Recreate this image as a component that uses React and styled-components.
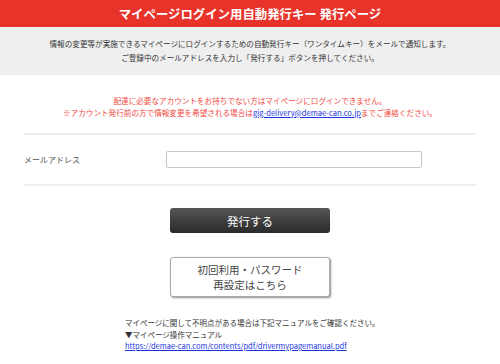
import React from 'react';
import styled, { createGlobalStyle } from 'styled-components';

const GlobalStyle = createGlobalStyle`
  body {
    margin: 0;
    background: #fff;
    font-family: "Noto Sans CJK JP", "Noto Sans", sans-serif;
    color: #333;
  }
`

const Header = styled.div`
  height: 27px;
  background-color: #e8332a;
  color: #fff;
  font-size: 12.4px;
  font-weight: bold;
  display: flex;
  align-items: center;
  justify-content: center;
`

const Intro = styled.div`
  background-color: #efefef;
  height: 48px;
  box-sizing: border-box;
  padding-top: 10px;
  text-align: center;
  font-size: 7.6px;
  line-height: 14px;
  color: #333;
`

const Notice = styled.div`
  padding-top: 20px;
  text-align: center;
  font-size: 7.6px;
  line-height: 11.5px;
  color: #f04a3f;
  height: 58px;
  box-sizing: border-box;
`

const MailLink = styled.a`
  color: #1a35e0;
  text-decoration: underline;
`

const FormRow = styled.div`
  margin: 0 24px;
  height: 49px;
  border-top: 2px solid #eee;
  border-bottom: 2px solid #eee;
  display: flex;
  align-items: center;
`

const Label = styled.div`
  width: 142px;
  font-size: 8px;
  color: #555;
`

const Input = styled.input`
  width: 256px;
  height: 17px;
  box-sizing: border-box;
  border: 1px solid #c8c8c8;
  border-radius: 2px;
  padding: 0 4px;
`

const Actions = styled.div`
  display: flex;
  flex-direction: column;
  align-items: center;
  padding-top: 22px;
  gap: 24px;
`

const IssueButton = styled.button`
  width: 160px;
  height: 25px;
  border: none;
  border-radius: 3px;
  background: linear-gradient(#555, #2a2a2a);
  color: #fff;
  font-family: inherit;
  font-size: 11.5px;
  padding: 0;
`

const ResetButton = styled.button`
  width: 160px;
  height: 40px;
  border: 1px solid #aaa;
  border-radius: 3px;
  background: #fff;
  box-shadow: 1px 1px 2px rgba(0, 0, 0, 0.45);
  color: #444;
  font-family: inherit;
  font-size: 10.5px;
  line-height: 15px;
  padding: 0;
`

const Help = styled.div`
  padding: 20px 0 0 125px;
  font-size: 7.5px;
  line-height: 11.5px;
  color: #333;
`

const ManualLink = styled.a`
  color: #1a35e0;
  text-decoration: underline;
`

export default function App() {
  return (
    <>
      <GlobalStyle />
      <Header>マイページログイン用自動発行キー 発行ページ</Header>
      <Intro>
        情報の変更等が実施できるマイページにログインするための自動発行キー（ワンタイムキー）をメールで通知します。<br />
        ご登録中のメールアドレスを入力し「発行する」ボタンを押してください。
      </Intro>
      <Notice>
        配達に必要なアカウントをお持ちでない方はマイページにログインできません。<br />
        ※アカウント発行前の方で情報変更を希望される場合は<MailLink href="#">gig-delivery@demae-can.co.jp</MailLink>までご連絡ください。
      </Notice>
      <FormRow>
        <Label>メールアドレス</Label>
        <Input type="text" />
      </FormRow>
      <Actions>
        <IssueButton>発行する</IssueButton>
        <ResetButton>初回利用・パスワード<br />再設定はこちら</ResetButton>
      </Actions>
      <Help>
        マイページに関して不明点がある場合は下記マニュアルをご確認ください。<br />
        ▼マイページ操作マニュアル<br />
        <ManualLink href="#">https://demae-can.com/contents/pdf/drivermypagemanual.pdf</ManualLink>
      </Help>
    </>
  );
}
